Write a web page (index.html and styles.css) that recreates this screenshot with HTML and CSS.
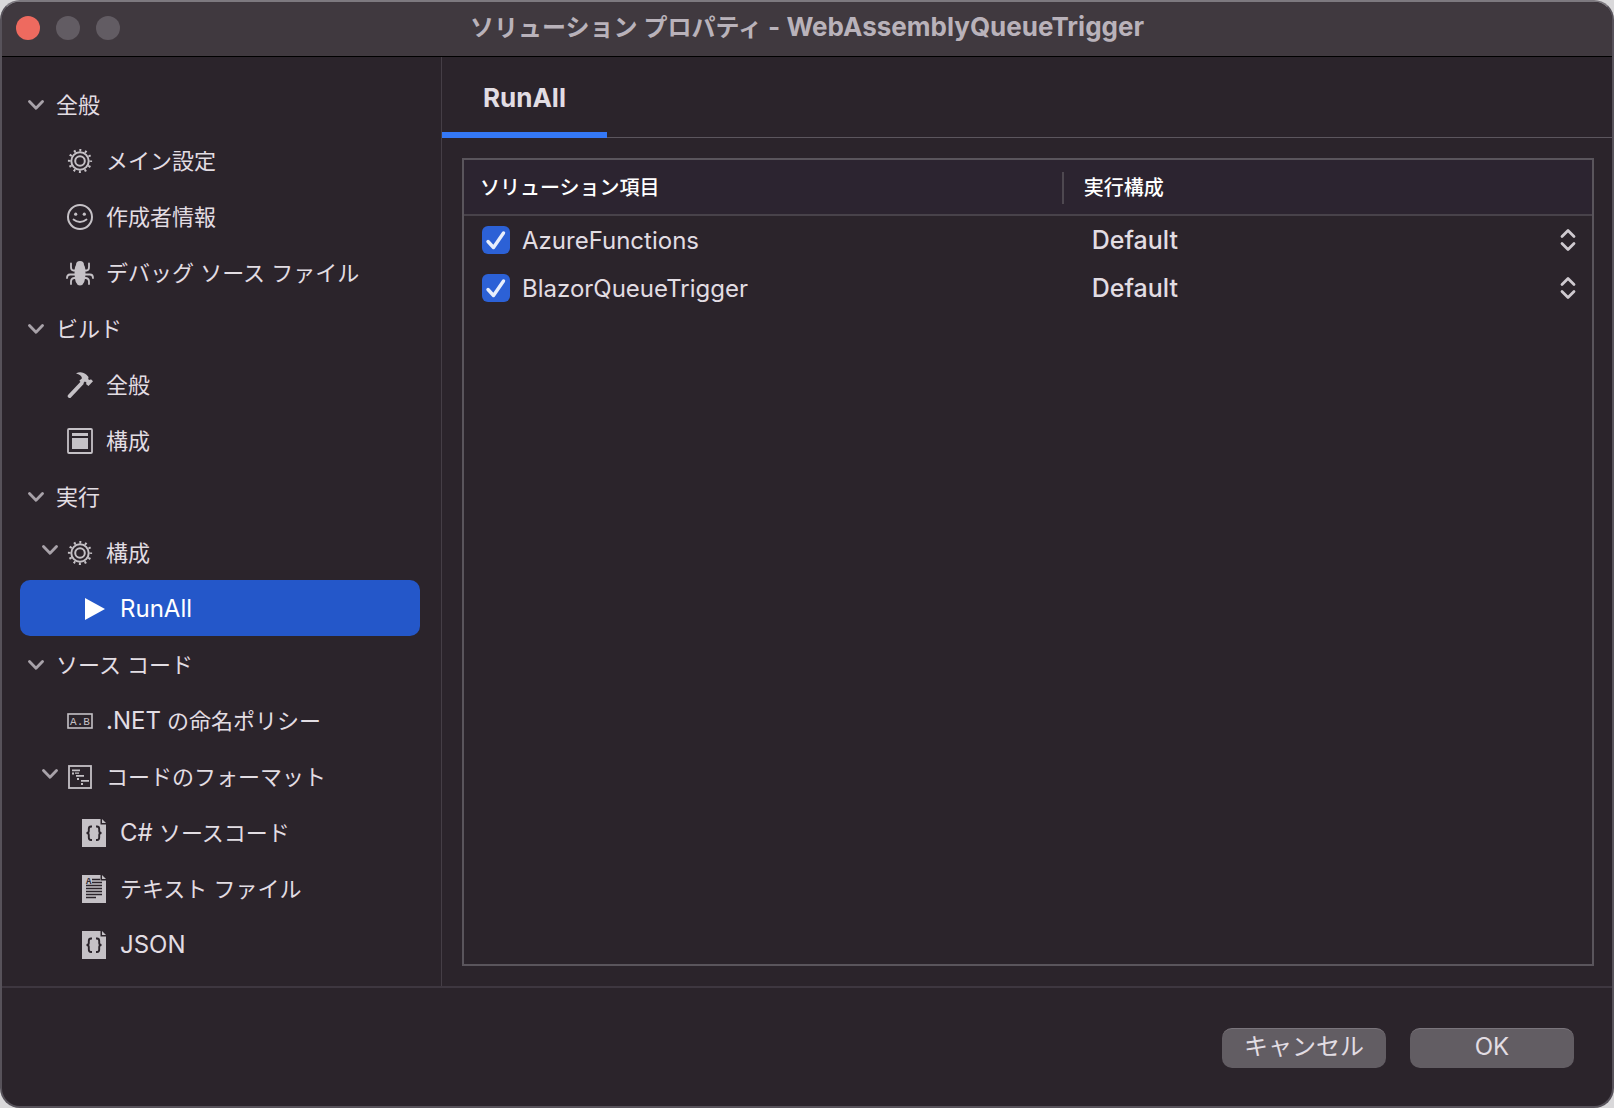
FILE: index.html
```html
<!DOCTYPE html>
<html lang="ja">
<head>
<meta charset="utf-8">
<title>ソリューション プロパティ - WebAssemblyQueueTrigger</title>
<link rel="stylesheet" href="styles.css">
</head>
<body>
<svg class="sprite" aria-hidden="true">
  <symbol id="chevron" viewBox="0 0 16 10"><path d="M1.500 1.500 8 8.200 14.500 1.500" fill="none" stroke="currentColor" stroke-width="2.800" stroke-linecap="round" stroke-linejoin="round"/></symbol>
  <symbol id="gear" viewBox="0 0 26 26"><g fill="none" stroke="currentColor"><circle cx="13" cy="13" r="8.700" stroke-width="2"/><circle cx="13" cy="13" r="4.800" stroke-width="2"/><circle cx="13" cy="13" r="10.800" stroke-width="2.600" stroke-dasharray="2 3.655" stroke-dashoffset="1"/></g></symbol>
  <symbol id="smiley" viewBox="0 0 26 26"><circle cx="13" cy="13" r="12" fill="none" stroke="currentColor" stroke-width="2"/><circle cx="8.700" cy="10.200" r="1.600" fill="currentColor"/><circle cx="17.300" cy="10.200" r="1.600" fill="currentColor"/><path d="M6.500 15.500Q13 20.500 19.500 15.500" fill="none" stroke="currentColor" stroke-width="1.800" stroke-linecap="round"/></symbol>
  <symbol id="bug" viewBox="0 0 28 26"><path d="M10 5Q10 1 14 1T18 5Q19.500 7 19.500 13 19.500 25.500 14 25.500T8.500 13Q8.500 7 10 5Z" fill="currentColor"/><g fill="none" stroke="currentColor" stroke-width="1.800" stroke-linecap="round" stroke-linejoin="round"><path d="M10 10.500H7Q5 10 5 7V3.500M18 10.500h3q2-.5 2-3.500V3.500M9.500 14.500H4Q1 14.500 1 18M18.500 14.500H24q3 0 3 3.500M10 18H8Q5 18.500 5 21.500V24M18 18h2q3 .5 3 3.500V24"/></g></symbol>
  <symbol id="hammer" viewBox="0 0 26 26"><path d="M2.700 24 14.500 11.500" fill="none" stroke="currentColor" stroke-width="4" stroke-linecap="round"/><path d="M9 1.500C12-.5 16.500-.2 19.500 2.800L21.500 5l-.3 2.200 1.500.9 1.300-.9 2 2-4.500 4.800-2.300-1.800.1-2-1.500-.8-2.300 2.600-3.200-3.200 2.700-2.600C14.500 3.700 12.500 2.500 9 1.500Z" fill="currentColor"/></symbol>
  <symbol id="window" viewBox="0 0 26 26"><rect x="1" y="1" width="24" height="24" rx="1" fill="none" stroke="currentColor" stroke-width="1.800"/><path d="M5 5h16v3H5zM5 10h16v11H5z" fill="currentColor"/></symbol>
  <symbol id="play" viewBox="0 0 24 28"><path d="M3 3 23 14 3 25Z" fill="currentColor"/></symbol>
  <symbol id="format" viewBox="0 0 26 26"><rect x="2" y="2" width="22" height="22" fill="none" stroke="currentColor" stroke-width="1.800"/><path d="M5 5.500h8v1.700H5zM5 8.500h2v2H5zM8 8.500h4v1.300H8zM9 11h8v1.700H9zM10 14h2v2h-2zM14 16h8v1.700h-8zM14 19h2v2h-2z" fill="currentColor"/></symbol>
  <symbol id="braces" viewBox="0 0 24 28"><path d="M0 0H18.500V5.500H24V28H0Z" fill="currentColor"/><path d="M20 0 24 4H20Z" fill="currentColor"/><path d="M10 7.500H9Q6.800 7.500 6.800 10v2Q6.800 14 4.500 14 6.800 14 6.800 16v2.500Q6.800 21 9 21h1M14 7.500h1q2.200 0 2.200 2.500v2q0 2 2.300 2-2.300 0-2.300 2v2.500Q17.200 21 15 21h-1" fill="none" stroke="#2b242b" stroke-width="1.900"/></symbol>
</svg>

<div class="window">
  <header class="titlebar">
    <div class="lights">
      <button class="light light-close" type="button" aria-label="閉じる"></button>
      <button class="light" type="button" aria-label="しまう" disabled></button>
      <button class="light" type="button" aria-label="拡大" disabled></button>
    </div>
    <h1 class="title">ソリューション プロパティ <span class="title-latin">- WebAssemblyQueueTrigger</span></h1>
  </header>

  <div class="body">
    <nav class="sidebar" aria-label="設定">
      <ul class="tree">
        <li>
          <button class="row" type="button" aria-expanded="true"><svg class="chevron"><use href="#chevron"/></svg>全般</button>
          <ul class="tree">
            <li><a class="row leaf" href="#main"><svg class="icon"><use href="#gear"/></svg>メイン設定</a></li>
            <li><a class="row leaf" href="#author"><svg class="icon"><use href="#smiley"/></svg>作成者情報</a></li>
            <li><a class="row leaf" href="#debug"><svg class="icon"><use href="#bug"/></svg>デバッグ ソース ファイル</a></li>
          </ul>
        </li>
        <li>
          <button class="row" type="button" aria-expanded="true"><svg class="chevron"><use href="#chevron"/></svg>ビルド</button>
          <ul class="tree">
            <li><a class="row leaf" href="#build-general"><svg class="icon"><use href="#hammer"/></svg>全般</a></li>
            <li><a class="row leaf" href="#build-config"><svg class="icon"><use href="#window"/></svg>構成</a></li>
          </ul>
        </li>
        <li>
          <button class="row" type="button" aria-expanded="true"><svg class="chevron"><use href="#chevron"/></svg>実行</button>
          <ul class="tree">
            <li>
              <button class="row branch" type="button" aria-expanded="true"><svg class="chevron"><use href="#chevron"/></svg><svg class="icon"><use href="#gear"/></svg>構成</button>
              <ul class="tree">
                <li><a class="row deep selected" href="#runall" aria-current="page"><svg class="icon-file"><use href="#play"/></svg><span class="latin">RunAll</span></a></li>
              </ul>
            </li>
          </ul>
        </li>
        <li>
          <button class="row" type="button" aria-expanded="true"><svg class="chevron"><use href="#chevron"/></svg>ソース コード</button>
          <ul class="tree">
            <li><a class="row leaf" href="#naming-policy"><svg class="icon" viewBox="0 0 26 26" aria-hidden="true"><rect x="1" y="6" width="24" height="14" fill="none" stroke="currentColor" stroke-width="1.600"/><text x="13" y="16.500" font-family="Liberation Mono, monospace" font-size="11" text-anchor="middle" fill="currentColor">A.B</text></svg><span><span class="latin">.NET</span> の命名ポリシー</span></a></li>
            <li>
              <button class="row branch" type="button" aria-expanded="true"><svg class="chevron"><use href="#chevron"/></svg><svg class="icon"><use href="#format"/></svg>コードのフォーマット</button>
              <ul class="tree">
                <li><a class="row deep" href="#csharp"><svg class="icon-file"><use href="#braces"/></svg><span><span class="latin">C#</span> ソースコード</span></a></li>
                <li><a class="row deep" href="#text"><svg class="icon-file" viewBox="0 0 24 28" aria-hidden="true"><path d="M0 0H18.500V5.500H24V28H0Z" fill="currentColor"/><path d="M20 0 24 4H20Z" fill="currentColor"/><path d="M10 4.500h8M10 7.500h10M4 10.500h16M4 13.500h16M4 16.500h16M4 19.500h16M4 22.500h10" stroke="#2b242b" stroke-width="1.300"/><text x="4" y="8.500" font-family="Liberation Mono, monospace" font-size="9" font-weight="700" fill="#2b242b">A</text></svg>テキスト ファイル</a></li>
                <li><a class="row deep" href="#json"><svg class="icon-file"><use href="#braces"/></svg><span class="latin">JSON</span></a></li>
              </ul>
            </li>
          </ul>
        </li>
      </ul>
    </nav>

    <main class="content">
      <div class="tabs" role="tablist">
        <button class="tab" type="button" role="tab" aria-selected="true">RunAll</button>
      </div>
      <div class="panel" role="tabpanel">
        <table class="items">
          <thead>
            <tr><th class="col-item" scope="col">ソリューション項目</th><th class="col-config" scope="col"><span class="col-label">実行構成</span></th></tr>
          </thead>
          <tbody>
            <tr>
              <td class="col-item"><label class="item"><input class="check" type="checkbox" checked>AzureFunctions</label></td>
              <td class="col-config"><select class="picker" aria-label="AzureFunctions 実行構成"><option>Default</option></select></td>
            </tr>
            <tr>
              <td class="col-item"><label class="item"><input class="check" type="checkbox" checked>BlazorQueueTrigger</label></td>
              <td class="col-config"><select class="picker" aria-label="BlazorQueueTrigger 実行構成"><option>Default</option></select></td>
            </tr>
          </tbody>
        </table>
      </div>
    </main>
  </div>

  <footer class="footer">
    <button class="button" type="button">キャンセル</button>
    <button class="button" type="button">OK</button>
  </footer>
</div>
</body>
</html>
```
FILE: styles.css
```css
* {
  box-sizing: border-box;
}

body {
  margin: 0;
  background: #d9d8da;
  color: #e2dde3;
  font-family: Inter, "Noto Sans CJK JP", sans-serif;
  font-size: 22px;
}

button,
select,
input {
  margin: 0;
  font: inherit;
  color: inherit;
}

.sprite {
  position: absolute;
  width: 0;
  height: 0;
}

.window {
  display: flex;
  flex-direction: column;
  min-height: 100vh;
  border: 2px solid #57525a;
  border-top-color: #7d797f;
  border-radius: 20px;
  background: #2b242b;
  overflow: hidden;
}

/* Title bar */
.titlebar {
  display: grid;
  grid-template-columns: 1fr auto 1fr;
  align-items: center;
  height: 55px;
  padding: 0 14px 2px;
  border-bottom: 1px solid #000;
  background: #40393f;
}

.lights {
  display: flex;
  gap: 16px;
}

.light {
  width: 24px;
  height: 24px;
  padding: 0;
  border: 0;
  border-radius: 50%;
  background: #625c63;
}

.light-close {
  background: #ee6a5f;
}

.title {
  margin: 0;
  padding-bottom: 2px;
  color: #b9b2ba;
  font-size: 24px;
  font-weight: 600;
  line-height: 32px;
  white-space: nowrap;
}

.title-latin {
  font-size: 26px;
  font-weight: 700;
}

/* Layout */
.body {
  display: flex;
  flex: 1;
}

.sidebar {
  flex: none;
  width: 440px;
  padding: 19px 21px 14px 18px;
  border-right: 1px solid #453e46;
}

.content {
  display: flex;
  flex: 1;
  flex-direction: column;
  min-width: 0;
}

/* Settings tree */
.tree {
  margin: 0;
  padding: 0;
  list-style: none;
}

.row {
  display: flex;
  align-items: center;
  gap: 12px;
  width: 100%;
  height: 56px;
  padding: 1px 0 0 8px;
  border: 0;
  border-radius: 10px;
  background: none;
  line-height: 32px;
  text-align: left;
  text-decoration: none;
  color: inherit;
  white-space: nowrap;
}

.leaf {
  padding-left: 46px;
}

.branch {
  padding-left: 22px;
}

.deep {
  padding-left: 62px;
  gap: 14px;
}

.selected {
  background: #2457c9;
  color: #fff;
}

.latin {
  font-size: 24px;
}

.chevron {
  flex: none;
  width: 16px;
  height: 10px;
  color: #a8a2a9;
}

.branch .chevron {
  margin: 0 -4px 6px 0;
}

.icon {
  flex: none;
  width: 28px;
  height: 26px;
  color: #c5c1c6;
}

.icon-file {
  flex: none;
  width: 24px;
  height: 28px;
  color: #c5c1c6;
}

.selected .icon-file {
  color: #fff;
}

/* Tabs */
.tabs {
  display: flex;
  height: 81px;
  border-bottom: 1px solid #5c565e;
}

.tab {
  height: 81px;
  padding: 6px 41px 0;
  border: 0;
  border-bottom: 6px solid #3478f6;
  background: none;
  font-size: 26px;
  font-weight: 700;
}

/* Solution items */
.panel {
  flex: 1;
  margin: 20px 18px 20px 20px;
  border: 2px solid #5a555c;
}

.items {
  width: 100%;
  border-spacing: 0;
  table-layout: fixed;
}

.items th {
  height: 56px;
  padding: 2px 0 0;
  border-bottom: 2px solid #48424a;
  background: #2c2430;
  color: #fff;
  font-size: 20px;
  font-weight: 500;
  line-height: 32px;
  text-align: left;
}

.items td {
  height: 48px;
  padding: 0;
}

.items .col-item {
  width: 53%;
  padding-left: 18px;
}

.items th.col-item {
  padding-left: 16px;
}

.col-label {
  display: block;
  padding-left: 20px;
  border-left: 2px solid #4e4850;
}

.item {
  display: flex;
  align-items: center;
  gap: 12px;
  font-size: 24px;
}

.check {
  flex: none;
  width: 28px;
  height: 28px;
  appearance: none;
  border-radius: 6px;
  background: #2c61d6 url("data:image/svg+xml,%3Csvg xmlns='http://www.w3.org/2000/svg' viewBox='0 0 28 28'%3E%3Cpath d='M6 15.500 11.500 21.500 21.500 7' fill='none' stroke='%23e8effc' stroke-width='3.400' stroke-linecap='round' stroke-linejoin='round'/%3E%3C/svg%3E") center / 28px no-repeat;
}

.picker {
  display: block;
  width: 100%;
  height: 48px;
  padding: 0 44px 0 30px;
  border: 0;
  appearance: none;
  background: transparent url("data:image/svg+xml,%3Csvg xmlns='http://www.w3.org/2000/svg' viewBox='0 0 16 24'%3E%3Cpath d='M2 8.500 8 2.500 14 8.500M2 15.500 8 21.500 14 15.500' fill='none' stroke='%23cfcad0' stroke-width='2.800' stroke-linecap='round' stroke-linejoin='round'/%3E%3C/svg%3E") right 16px center / 16px 24px no-repeat;
  font-size: 25px;
  font-weight: 500;
}

/* Dialog buttons */
.footer {
  display: flex;
  justify-content: flex-end;
  gap: 24px;
  padding: 40px 38px 38px;
  border-top: 2px solid #3e3740;
}

.button {
  width: 164px;
  height: 40px;
  padding: 0 0 3px;
  border: 0;
  border-top: 1px solid #7a757c;
  border-radius: 10px;
  background: #625d63;
  font-size: 24px;
  line-height: 32px;
}
```
